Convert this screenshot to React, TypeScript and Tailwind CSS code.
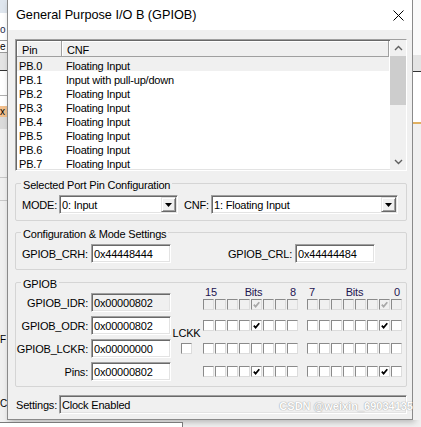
import clsx from 'clsx';

const SUNKEN =
  'border border-t-[#a0a0a0] border-l-[#a0a0a0] border-r-white border-b-white shadow-[inset_1px_1px_0_#696969,inset_-1px_-1px_0_#e3e3e3]';

const PINS = [
  ['PB.0', 'Floating Input'],
  ['PB.1', 'Input with pull-up/down'],
  ['PB.2', 'Floating Input'],
  ['PB.3', 'Floating Input'],
  ['PB.4', 'Floating Input'],
  ['PB.5', 'Floating Input'],
  ['PB.6', 'Floating Input'],
  ['PB.7', 'Floating Input'],
];

const HI = [15, 14, 13, 12, 11, 10, 9, 8];
const LO = [7, 6, 5, 4, 3, 2, 1, 0];

function Chevron({ up }: { up?: boolean }) {
  return (
    <svg width="9" height="6" viewBox="0 0 9 6">
      <path d={up ? 'M1 5 L4.5 1.5 L8 5' : 'M1 1 L4.5 4.5 L8 1'} fill="none" stroke="#606060" strokeWidth="1.4" />
    </svg>
  );
}

function TextBox({ value, width, readOnly }: { value: string; width: string; readOnly?: boolean }) {
  return (
    <div
      className={clsx(
        SUNKEN,
        'h-[19px] pl-[2px] leading-[19px] whitespace-nowrap overflow-hidden',
        width,
        readOnly ? 'bg-[#f0f0f0]' : 'bg-white',
      )}
    >
      {value}
    </div>
  );
}

function Combo({ value, width }: { value: string; width: string }) {
  return (
    <div className={clsx(SUNKEN, 'h-[19px] bg-white flex items-center', width)}>
      <span className="flex-1 pl-[2px] pt-[2px] leading-[15px] whitespace-nowrap">{value}</span>
      <div className="w-[15px] h-[15px] mr-px bg-[#f0f0f0] border border-t-[#e3e3e3] border-l-[#e3e3e3] border-r-[#696969] border-b-[#696969] shadow-[inset_1px_1px_0_white,inset_-1px_-1px_0_#a0a0a0] flex items-center justify-center">
        <svg width="7" height="4" viewBox="0 0 7 4">
          <path d="M0 0 H7 L3.5 4 Z" fill="#000" />
        </svg>
      </div>
    </div>
  );
}

function Check({ on, dis }: { on?: boolean; dis?: boolean }) {
  return (
    <div
      className={clsx(
        'w-[11px] h-[11px] border border-t-[#8a8a8a] border-l-[#8a8a8a] border-r-[#dcdcdc] border-b-[#dcdcdc] flex items-center justify-center',
        dis ? 'bg-[#f0f0f0]' : 'bg-white',
      )}
    >
      {on && (
        <svg width="7" height="7" viewBox="0 0 7 7">
          <path d="M0.8 3.6 L2.6 5.6 L6.3 1.2" fill="none" stroke={dis ? '#a8a8a8' : '#000'} strokeWidth="1.7" />
        </svg>
      )}
    </div>
  );
}

function BitRow({ value, dis, className }: { value: number; dis?: boolean; className?: string }) {
  return (
    <div className={clsx('flex gap-[9px]', className)}>
      {[HI, LO].map((g, i) => (
        <div key={i} className="flex gap-px">
          {g.map((b) => (
            <Check key={b} on={((value >> b) & 1) === 1} dis={dis} />
          ))}
        </div>
      ))}
    </div>
  );
}

function Group({ title, className, children }: { title: string; className?: string; children: React.ReactNode }) {
  return (
    <div className={clsx('border border-[#d5d5d5] rounded-[2px]', className)}>
      <div className="h-[14px] -my-[7px] leading-[16px] ml-[5px] px-[2px] bg-[#f0f0f0] w-fit whitespace-nowrap">{title}</div>
      {children}
    </div>
  );
}

export default function App() {
  const regs = [
    { label: 'GPIOB_IDR:', value: '0x00000802', ro: true },
    { label: 'GPIOB_ODR:', value: '0x00000802' },
    { label: 'GPIOB_LCKR:', value: '0x00000000' },
    { label: 'Pins:', value: '0x00000802' },
  ];

  return (
    <div className="relative w-[421px] h-[427px] overflow-hidden bg-[#f0f0f0] text-black font-['Liberation_Sans',Arial,sans-serif] text-[11px] tracking-[-0.2px] flex flex-col">
      <div className="flex h-[420px]">
        {/* background window, left */}
        <div className="w-[7px] flex flex-col overflow-hidden leading-[12px] text-[10px]">
          <div className="h-[13px] bg-[#dfe6ee]" />
          <div className="h-[11px] bg-white" />
          <div className="h-[16px] bg-white whitespace-nowrap text-[#1c2a4a]">o</div>
          <div className="h-[13px] bg-white border-y border-[#9a9a9a] whitespace-nowrap">e</div>
          <div className="h-[17px] bg-[#e4e4e4]" />
          <div className="h-px bg-[#333]" />
          <div className="h-[24px] bg-white" />
          <div className="h-px bg-[#b0b0b0]" />
          <div className="h-[10px] bg-white" />
          <div className="h-[11px] bg-[#f2c08e] whitespace-nowrap">x</div>
          <div className="h-[12px] bg-[#dadada]" />
          <div className="h-[48px]" />
          <div className="h-px bg-[#c8c8c8]" />
          <div className="h-[22px]" />
          <div className="h-px bg-[#c8c8c8]" />
          <div className="h-[133px]" />
          <div className="h-[14px] whitespace-nowrap">F</div>
          <div className="h-[50px]" />
          <div className="h-[14px] whitespace-nowrap">C</div>
        </div>

        {/* dialog */}
        <div className="w-[406px] h-[420px] bg-[#f0f0f0] border-x border-b border-[#8a8a8a] shadow-[2px_2px_6px_rgba(0,0,0,0.25)] flex flex-col">
          <div className="h-[30px] shrink-0 bg-white flex items-center justify-between pl-[8px] pr-[8px]">
            <span className="text-[12.7px] tracking-normal pt-px">General Purpose I/O B (GPIOB)</span>
            <svg width="11" height="11" viewBox="0 0 11 11">
              <path d="M0.5 0.5 L10.5 10.5 M10.5 0.5 L0.5 10.5" stroke="#000" strokeWidth="1" />
            </svg>
          </div>

          <div className="pl-[7px] w-[399px]">
            {/* list view */}
            <div className={clsx(SUNKEN, 'mt-[9px] w-[392px] h-[132px] bg-white flex overflow-hidden')}>
              <div className="flex-1 p-px">
                <div className="flex h-[16px] leading-[16px] bg-[#f0f0f0]">
                  <div className="w-[45px] pl-[5px] pt-px border-r border-b border-[#a0a0a0] shadow-[inset_1px_1px_0_white]">Pin</div>
                  <div className="flex-1 pl-[5px] pt-px border-r border-b border-[#a0a0a0] shadow-[inset_1px_1px_0_white]">CNF</div>
                </div>
                {PINS.map(([p, c], i) => (
                  <div key={p} className={clsx('flex h-[14px] leading-[14px] pt-[2px]', i === 0 && 'bg-[#f0f0f0]')}>
                    <div className="w-[49px] pl-[2px]">{p}</div>
                    <div>{c}</div>
                  </div>
                ))}
              </div>
              <div className="w-[16px] bg-[#f0f0f0] flex flex-col">
                <div className="h-[16px] flex items-center justify-center">
                  <Chevron up />
                </div>
                <div className="h-[49px] bg-[#cdcdcd]" />
                <div className="flex-1" />
                <div className="h-[16px] flex items-center justify-center">
                  <Chevron />
                </div>
              </div>
            </div>

            {/* selected pin */}
            <Group title="Selected Port Pin Configuration" className="mt-[12px]">
              <div className="flex items-center pt-[11px] pb-[6px] pl-[6px]">
                <span className="w-[37px] pt-[2px]">MODE:</span>
                <Combo value="0: Input" width="w-[119px]" />
                <span className="w-[27px] ml-[6px] pt-[2px]">CNF:</span>
                <Combo value="1: Floating Input" width="w-[187px]" />
              </div>
            </Group>

            {/* config */}
            <Group title="Configuration & Mode Settings" className="mt-[11px]">
              <div className="flex items-center pt-[11px] pb-[6px] pl-[6px]">
                <span className="w-[69px] pt-[2px]">GPIOB_CRH:</span>
                <TextBox value="0x44448444" width="w-[80px]" />
                <span className="w-[67px] ml-[57px] pt-[2px]">GPIOB_CRL:</span>
                <TextBox value="0x44444484" width="w-[80px]" />
              </div>
            </Group>

            {/* GPIOB */}
            <Group title="GPIOB" className="mt-[12px]">
              <div className="flex pb-[5px]">
                <div className="mt-[10px] flex flex-col gap-[4px]">
                  {regs.map((r) => (
                    <div key={r.label} className="flex items-center">
                      <span className="w-[72px] text-right whitespace-nowrap pt-[2px]">{r.label}</span>
                      <div className="ml-[3px]">
                        <TextBox value={r.value} width="w-[80px]" readOnly={r.ro} />
                      </div>
                    </div>
                  ))}
                </div>
                <div className="w-[28px] flex flex-col items-center pt-[44px]">
                  <span className="leading-[13px] pl-[3px]">LCKK</span>
                  <div className="mt-[3px] ml-[3px]">
                    <Check />
                  </div>
                </div>
                <div className="ml-[4px] mt-[3px] flex flex-col">
                  <div className="flex gap-[9px] h-[13px] leading-[13px] text-[#1e1450]">
                    <div className="w-[95px] px-[2px] flex justify-between">
                      <span>15</span>
                      <span>Bits</span>
                      <span>8</span>
                    </div>
                    <div className="w-[95px] px-[2px] flex justify-between">
                      <span>7</span>
                      <span>Bits</span>
                      <span>0</span>
                    </div>
                  </div>
                  <BitRow value={0x802} dis />
                  <BitRow value={0x802} className="mt-[10px]" />
                  <BitRow value={0} className="mt-[12px]" />
                  <BitRow value={0x802} className="mt-[12px]" />
                </div>
              </div>
            </Group>

            {/* status */}
            <div className="mt-[8px] flex items-center pl-px">
              <span className="w-[43px] pt-[2px]">Settings:</span>
              <TextBox value="Clock Enabled" width="w-[349px]" readOnly />
            </div>
          </div>
        </div>

        {/* background window, right */}
        <div className="flex-1 flex flex-col">
          <div className="h-[55px] bg-[#fafafa]" />
          <div className="h-[16px] bg-[#e4e4e4]" />
          <div className="h-px bg-[#333]" />
          <div className="h-[50px] bg-white" />
          <div className="h-[2px] bg-[#e0b060]" />
          <div className="flex-1 bg-[#f0f0f0]" />
        </div>
      </div>

      {/* background window, bottom */}
      <div className="flex-1 flex">
        <div className="w-[183px] mt-[2px] bg-white border-t border-r border-[#7a7a7a]" />
        <div className="flex-1" />
      </div>

      <div className="absolute right-[8px] bottom-[13px] text-[11px] font-bold tracking-[0px] text-white [text-shadow:0_0_1px_#9a9a9a,0_0_1px_#9a9a9a] opacity-90">
        CSDN @weixin_69034135
      </div>
    </div>
  );
}
